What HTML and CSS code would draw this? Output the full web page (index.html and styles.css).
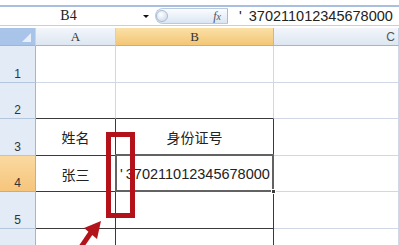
FILE: index.html
```html
<!DOCTYPE html>
<html>
<head>
<meta charset="utf-8">
<link rel="stylesheet" href="styles.css">
</head>
<body>
<div class="app">
  <div class="ribbon-edge"></div>
  <div class="fbar">
    <div class="namebox">B4</div>
    <div class="nb-drop"><span class="tri"></span></div>
    <div class="fx-area"><span class="knob"></span><span class="fx">f<i>x</i></span></div>
    <div class="formula"><span class="apos">'</span>370211012345678000</div>
  </div>
  <div class="gap"></div>
  <div class="sheet">
    <div class="corner"><span class="corner-tri"></span></div>
    <div class="colh serif">A</div>
    <div class="colh serif sel">B</div>
    <div class="colh c">C</div>

    <div class="rowh">1</div>
    <div class="cell"></div>
    <div class="cell"></div>
    <div class="cell"></div>

    <div class="rowh">2</div>
    <div class="cell tb-b"></div>
    <div class="cell tb-b"></div>
    <div class="cell"></div>

    <div class="rowh">3</div>
    <div class="cell tb tb-b txt">姓名</div>
    <div class="cell tb tb-b txt">身份证号</div>
    <div class="cell"></div>

    <div class="rowh sel">4</div>
    <div class="cell tb tb-b txt">张三</div>
    <div class="cell tb tb-b num active"><span class="apos2">'</span>370211012345678000</div>
    <div class="cell"></div>

    <div class="rowh">5</div>
    <div class="cell tb tb-b"></div>
    <div class="cell tb tb-b"></div>
    <div class="cell"></div>

    <div class="rowh"></div>
    <div class="cell tb"></div>
    <div class="cell tb"></div>
    <div class="cell"></div>
  </div>
  <div class="mark"></div>
  <svg class="arrow" width="60" height="50" viewBox="60 200 60 50">
    <line x1="79" y1="250" x2="92" y2="231" stroke="#b3141b" stroke-width="5"/>
    <polygon points="101,221 84,228 97,239" fill="#b3141b"/>
  </svg>
</div>
</body>
</html>
```
FILE: styles.css
```css
html, body {
  margin: 0;
  padding: 0;
  background: #ffffff;
}
body {
  width: 399px;
  height: 245px;
  overflow: hidden;
  font-family: "Liberation Sans", Arial, "Noto Sans CJK SC", sans-serif;
  color: #222;
}
.app {
  position: relative;
  width: 399px;
  height: 245px;
  padding-top: 5px;
  box-sizing: border-box;
  overflow: hidden;
}
.ribbon-edge {
  height: 2px;
  background: #a9bfe0;
}
.fbar {
  height: 18px;
  display: flex;
  border-bottom: 1px solid #c4d0e1;
  background: #fff;
}
.namebox {
  width: 137px;
  text-align: center;
  font-family: "Liberation Serif", serif;
  font-size: 14px;
  line-height: 18px;
  color: #222;
}
.nb-drop {
  width: 18px;
  display: flex;
  align-items: center;
  padding-left: 6px;
  box-sizing: border-box;
}
.tri {
  width: 0;
  height: 0;
  border-left: 3px solid transparent;
  border-right: 3px solid transparent;
  border-top: 3px solid #111;
}
.fx-area {
  width: 73px;
  height: 16px;
  margin-top: 1px;
  box-sizing: border-box;
  border: 1px solid #b9c9de;
  border-right-color: #a8bad3;
  border-radius: 8px 0 0 8px;
  background: linear-gradient(#fbfcfe, #dbe6f3);
  display: flex;
  align-items: center;
  justify-content: space-between;
  padding-right: 6px;
}
.knob {
  width: 12px;
  height: 12px;
  border-radius: 50%;
  box-sizing: border-box;
  border: 1px solid #a9bcd6;
  background: radial-gradient(circle at 40% 35%, #ffffff, #c6d5e8);
}
.fx {
  font-family: "Liberation Serif", serif;
  font-style: italic;
  font-size: 12px;
  color: #4a5566;
  line-height: 14px;
}
.fx i {
  font-size: 10px;
}
.formula {
  flex: 1;
  padding-left: 11px;
  font-size: 14.5px;
  line-height: 18px;
  white-space: nowrap;
  color: #222;
}
.apos {
  margin-right: 7px;
}
.gap {
  height: 2px;
}
.sheet {
  display: grid;
  grid-template-columns: 36px 80px 158px 1fr;
  grid-template-rows: 18px 37px 36px 37px 36px 37px 40px;
}
.corner {
  position: relative;
  background: #a9c4e9;
  border-right: 1px solid #c9d6e8;
  border-bottom: 1px solid #9eb6ce;
  box-sizing: border-box;
}
.corner-tri {
  position: absolute;
  right: 4px;
  bottom: 3px;
  width: 0;
  height: 0;
  border-left: 9px solid transparent;
  border-bottom: 9px solid #e8effa;
}
.colh {
  box-sizing: border-box;
  background: linear-gradient(#f3f6fb, #dde6f1);
  border-right: 1px solid #c5d2e3;
  border-bottom: 1px solid #9eb6ce;
  display: flex;
  align-items: center;
  justify-content: center;
  font-size: 12px;
  color: #333;
}
.colh.serif {
  font-family: "Liberation Serif", serif;
  font-size: 13px;
}
.colh.sel {
  background: linear-gradient(#fbe0a6, #f3c677);
  border-bottom-color: #e8a64e;
  border-right-color: #d8b47a;
}
.colh.c {
  justify-content: flex-end;
  padding-right: 3px;
  color: #555;
}
.rowh {
  box-sizing: border-box;
  background: #e3ebf6;
  border-right: 1px solid #9eb6ce;
  border-bottom: 1px solid #b4c6db;
  display: flex;
  align-items: flex-end;
  justify-content: center;
  padding-bottom: 1px;
  font-size: 12px;
  line-height: 14px;
  color: #333;
}
.rowh.sel {
  background: linear-gradient(#fad9a0, #f6c57c);
  border-bottom-color: #d9a969;
}
.cell {
  box-sizing: border-box;
  border-right: 1px solid #d0d7e5;
  border-bottom: 1px solid #d0d7e5;
  position: relative;
}
.cell.tb {
  border-right-color: #3a3a3a;
}
.cell.tb-b {
  border-bottom-color: #3a3a3a;
}
.txt {
  display: flex;
  align-items: center;
  justify-content: center;
  font-family: "Noto Sans CJK SC", sans-serif;
  font-size: 14px;
  color: #222;
}
.num {
  display: flex;
  align-items: center;
  padding-left: 4px;
  font-size: 14.5px;
  white-space: nowrap;
  color: #222;
}
.apos2 {
  margin-right: 3px;
}
.active::after {
  content: "";
  position: absolute;
  left: -1px;
  top: -2px;
  right: -1px;
  bottom: -1px;
  border: 2px solid #626262;
  pointer-events: none;
}
.active::before {
  content: "";
  position: absolute;
  right: -3px;
  bottom: -3px;
  width: 5px;
  height: 5px;
  background: #3a3a3a;
  border: 1px solid #fff;
  box-sizing: border-box;
  z-index: 2;
}
.mark {
  position: absolute;
  left: 106px;
  top: 132px;
  width: 29px;
  height: 86px;
  box-sizing: border-box;
  border: 5px solid #b3121b;
}
.arrow {
  position: absolute;
  left: 60px;
  top: 200px;
}
```
